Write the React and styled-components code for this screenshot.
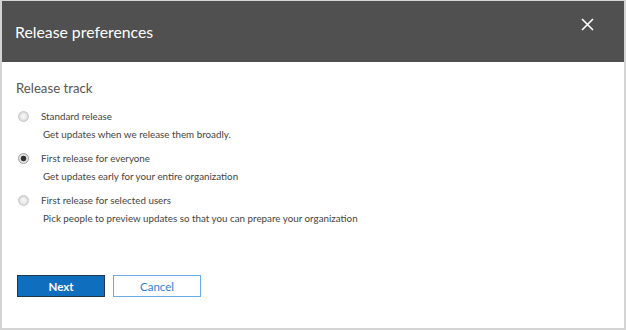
import React from "react";
import styled, { createGlobalStyle } from "styled-components";

const Global = createGlobalStyle`
  html, body {
    margin: 0;
    padding: 0;
    background: #ffffff;
  }
  body {
    font-family: Lato, "Liberation Sans", sans-serif;
  }
`;

const options = [
  {
    id: "standard",
    label: "Standard release",
    desc: "Get updates when we release them broadly.",
  },
  {
    id: "first-all",
    label: "First release for everyone",
    desc: "Get updates early for your entire organization",
  },
  {
    id: "first-selected",
    label: "First release for selected users",
    desc: "Pick people to preview updates so that you can prepare your organization",
  },
];

export default function App() {
  const [track, setTrack] = React.useState("first-all");

  return (
    <>
      <Global />
      <Panel>
        <Header>
          <Title>Release preferences</Title>
          <CloseButton aria-label="Close">
            <svg width="13" height="13" viewBox="0 0 13 13">
              <path d="M1 1 L12 12 M12 1 L1 12" stroke="#ffffff" strokeWidth="1.6" />
            </svg>
          </CloseButton>
        </Header>
        <Body>
          <SectionTitle>Release track</SectionTitle>
          <OptionList>
            {options.map((opt) => (
              <Option key={opt.id} onClick={() => setTrack(opt.id)}>
                <OptionRow>
                  <Radio checked={track === opt.id} />
                  <Label>{opt.label}</Label>
                </OptionRow>
                <Desc>{opt.desc}</Desc>
              </Option>
            ))}
          </OptionList>
          <Buttons>
            <Button primary>Next</Button>
            <Button>Cancel</Button>
          </Buttons>
        </Body>
      </Panel>
    </>
  );
}

const Panel = styled.div`
  width: 626px;
  height: 330px;
  box-sizing: border-box;
  border-top: 1px solid #d4d4d4;
  border-left: 2px solid #d4d4d4;
  border-right: 2px solid #d4d4d4;
  border-bottom: 2px solid #d4d4d4;
  background: #ffffff;
  display: flex;
  flex-direction: column;
`;

const Header = styled.div`
  height: 61px;
  background: #505050;
  display: flex;
  align-items: flex-start;
  justify-content: space-between;
  padding: 0 30px 0 13px;
  box-sizing: border-box;
`;

const Title = styled.h1`
  margin: 21px 0 0;
  font-size: 15.8px;
  line-height: 20px;
  font-weight: 400;
  color: #ffffff;
`;

const CloseButton = styled.button`
  margin-top: 17px;
  padding: 0;
  border: none;
  background: none;
  width: 13px;
  height: 13px;
  display: flex;
  cursor: pointer;
`;

const Body = styled.div`
  flex: 1;
  padding: 16px 0 0 14px;
  display: flex;
  flex-direction: column;
`;

const SectionTitle = styled.h2`
  margin: 0;
  font-size: 13.2px;
  font-weight: 400;
  color: #555555;
  line-height: 20px;
`;

const OptionList = styled.div`
  margin-top: 9px;
  display: flex;
  flex-direction: column;
  gap: 6px;
`;

const Option = styled.div`
  cursor: pointer;
  display: flex;
  flex-direction: column;
  height: 36px;
`;

const OptionRow = styled.div`
  display: flex;
  align-items: center;
  height: 18px;
`;

const Radio = styled.span`
  width: 11px;
  height: 11px;
  margin-left: 2px;
  border-radius: 50%;
  border: 1px solid ${(p) => (p.checked ? "#9a9a9a" : "#c8c8c8")};
  background: ${(p) =>
    p.checked
      ? "radial-gradient(circle, #333333 0 2.5px, #e6e6e6 3.2px)"
      : "radial-gradient(circle, #f2f2f2 0 2px, #dcdcdc 4px)"};
  box-sizing: border-box;
`;

const Label = styled.span`
  margin-left: 12px;
  font-size: 9.8px;
  color: #444444;
`;

const Desc = styled.span`
  margin-left: 27px;
  font-size: 9.8px;
  color: #444444;
  line-height: 18px;
`;

const Buttons = styled.div`
  margin-top: 48px;
  margin-left: 1px;
  display: flex;
  gap: 8px;
`;

const Button = styled.button`
  width: 88px;
  height: 22px;
  box-sizing: border-box;
  font-family: inherit;
  font-size: 11.5px;
  font-weight: ${(p) => (p.primary ? 700 : 400)};
  color: ${(p) => (p.primary ? "#ffffff" : "#2f7ed0")};
  background: ${(p) => (p.primary ? "#106ebe" : "#ffffff")};
  border: 1px solid ${(p) => (p.primary ? "#1d3850" : "#6aaae6")};
  padding: 0;
  cursor: pointer;
`;
